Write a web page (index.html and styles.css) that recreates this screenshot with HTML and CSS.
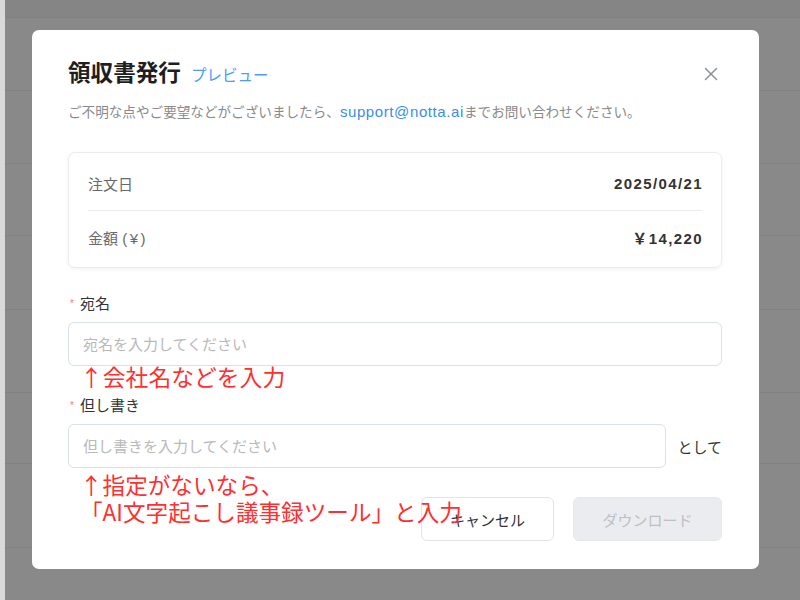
FILE: index.html
```html
<!DOCTYPE html>
<html lang="ja">
<head>
<meta charset="utf-8">
<title>領収書発行</title>
<link rel="stylesheet" href="styles.css">
</head>
<body>
<div class="page">
  <div class="band"></div>
  <div class="row r1"></div>
  <div class="row r2"></div>
  <div class="row r3"></div>
  <div class="row r4"></div>
  <div class="row r5"></div>
  <div class="row r6"></div>
  <div class="row r7"></div>
  <div class="row last"></div>
</div>

<div class="modal">
  <div class="header">
    <div class="title-wrap">
      <h1 class="title">領収書発行</h1>
      <span class="preview">プレビュー</span>
    </div>
    <button class="close" aria-label="閉じる">
      <svg width="14" height="14" viewBox="0 0 14 14"><path d="M1.5 1.5 L12.5 12.5 M12.5 1.5 L1.5 12.5" stroke="#8c9097" stroke-width="1.5" stroke-linecap="round" fill="none"/></svg>
    </button>
  </div>
  <p class="sub">ご不明な点やご要望などがございましたら、<a class="mail">support@notta.ai</a>までお問い合わせください。</p>

  <div class="card">
    <div class="card-row first"><span class="k">注文日</span><span class="v">2025/04/21</span></div>
    <div class="card-row"><span class="k">金額 <span class="yen">(¥)</span></span><span class="v">￥14,220</span></div>
  </div>

  <div class="field">
    <label class="label"><span class="req">*</span>宛名</label>
    <input class="input" placeholder="宛名を入力してください">
  </div>
  <div class="note">↑会社名などを入力</div>

  <div class="field field2">
    <label class="label"><span class="req">*</span>但し書き</label>
    <div class="inline">
      <input class="input" placeholder="但し書きを入力してください">
      <span class="suffix">として</span>
    </div>
    <div class="note note-over">↑指定がないなら、<br>「AI文字起こし議事録ツール」と入力</div>
  </div>

  <div class="footer">
    <button class="btn cancel">キャンセル</button>
    <button class="btn download">ダウンロード</button>
  </div>
</div>
</body>
</html>
```

FILE: styles.css
```css
* { box-sizing: border-box; }
html, body { margin: 0; padding: 0; }
body {
  width: 800px;
  height: 600px;
  overflow: hidden;
  font-family: "Liberation Sans", "Noto Sans CJK JP", sans-serif;
  background: #898989;
}

/* dimmed background page */
.page {
  width: 800px;
  height: 600px;
  border-left: 5px solid #d9d9d9;
  display: flex;
  flex-direction: column;
}
.band { height: 17px; background: #858585; flex: none; }
.row { flex: none; border-top: 1px solid #818181; }
.r1 { height: 73px; }
.r2 { height: 73px; }
.r3 { height: 72px; }
.r4 { height: 74px; }
.r5 { height: 83px; }
.r6 { height: 71px; }
.r7 { height: 84px; }
.last { flex: 1; }

/* modal overlay */
.modal {
  position: absolute;
  left: 32px;
  top: 30px;
  width: 727px;
  height: 539px;
  background: #fff;
  border-radius: 7px;
  padding: 30px 37px 0 36px;
}

.header {
  display: flex;
  align-items: center;
  justify-content: space-between;
  height: 28px;
}
.title-wrap { display: flex; align-items: center; }
.title {
  margin: 0;
  font-size: 22.6px;
  line-height: 28px;
  font-weight: 700;
  color: #1e1e1e;
}
.preview {
  margin-left: 10px;
  font-size: 15.5px;
  color: #4b9cf2;
}
.close {
  border: 0;
  background: none;
  padding: 0;
  width: 14px;
  height: 14px;
  margin-right: 4px;
  display: flex;
}

.sub {
  margin: 15px 0 0;
  height: 20px;
  font-size: 13.6px;
  line-height: 20px;
  color: #8a8a8a;
  white-space: nowrap;
}
.mail {
  color: #3a8ee6;
  text-decoration: none;
  font-size: 15px;
  line-height: 1;
  letter-spacing: 0.6px;
}

.card {
  margin-top: 29px;
  border: 1px solid #ececec;
  border-radius: 7px;
  box-shadow: 0 1px 4px rgba(0, 0, 0, 0.06);
  padding: 4px 19px 4px;
}
.card-row {
  height: 52px;
  display: flex;
  align-items: center;
  justify-content: space-between;
  font-size: 15px;
}
.card-row.first { border-bottom: 1px solid #ebebeb; height: 54px; }
.k { color: #6a6a6a; }
.yen { letter-spacing: 2.5px; }
.v { color: #333; font-weight: 700; letter-spacing: 1.4px; margin-right: -1px; }

.field { margin-top: 25px; }
.label {
  display: flex;
  align-items: center;
  font-size: 15px;
  line-height: 22px;
  color: #333;
}
.req {
  color: #f08080;
  font-size: 10px;
  width: 12px;
  padding-left: 2px;
}
.input {
  display: block;
  width: 100%;
  height: 44px;
  margin-top: 7px;
  border: 1px solid #d9e1ea;
  border-radius: 6px;
  padding: 0 14px;
  font-family: "Liberation Sans", "Noto Sans CJK JP", sans-serif;
  font-size: 15px;
  color: #333;
  background: #fff;
  outline: none;
}
.input::placeholder { color: #b9b9b9; }

.note {
  padding-left: 12px;
  font-family: "Noto Sans CJK JP", sans-serif;
  font-size: 22.8px;
  line-height: 22px;
  color: #ff2f2f;
  white-space: nowrap;
}
.field2 { margin-top: 7px; position: relative; }
.inline { display: flex; align-items: center; }
.inline .input { flex: 1; }
.suffix {
  margin-left: 11px;
  margin-top: 7px;
  font-size: 15px;
  color: #333;
  white-space: nowrap;
}
.note-over {
  position: absolute;
  left: 0;
  top: 100%;
  margin-top: 3px;
  font-size: 22.6px;
  line-height: 27px;
  z-index: 2;
}

.footer {
  margin-top: 29px;
  display: flex;
  justify-content: flex-end;
  gap: 19px;
}
.btn {
  height: 44px;
  border-radius: 6px;
  font-family: "Liberation Sans", "Noto Sans CJK JP", sans-serif;
  font-size: 15px;
}
.cancel {
  width: 133px;
  background: #fff;
  border: 1px solid #e1e4e8;
  color: #333;
}
.download {
  width: 149px;
  background: #ebecef;
  border: 1px solid #e6e8eb;
  color: #bcc0c6;
}
```
